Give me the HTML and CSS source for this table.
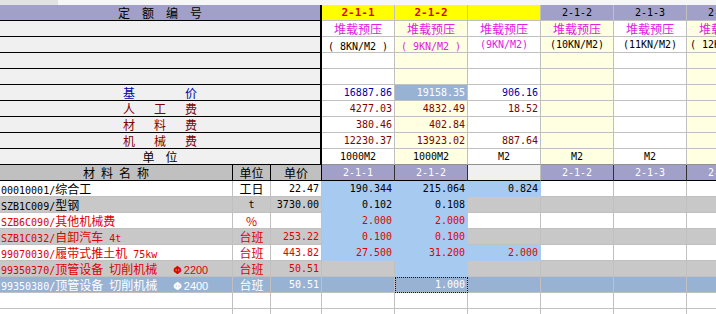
FILE: index.html
```html
<!DOCTYPE html>
<html lang="zh">
<head>
<meta charset="utf-8">
<link rel="stylesheet" href="styles.css">
</head>
<body>
<div class="grid">
  <div class="strip"></div>

  <div class="c m hd spread4">定额编号</div>
  <div class="c yl hr">2-1-1</div>
  <div class="c yl hr">2-1-2</div>
  <div class="c yl"></div>
  <div class="c hd n">2-1-2</div>
  <div class="c hd n">2-1-3</div>
  <div class="c hd n">2-1-4</div>

  <div class="c m"></div>
  <div class="c w mg">堆载预压</div>
  <div class="c ly mg">堆载预压</div>
  <div class="c w mg">堆载预压</div>
  <div class="c ly mg">堆载预压</div>
  <div class="c w mg">堆载预压</div>
  <div class="c ly mg">堆载预压</div>

  <div class="c m"></div>
  <div class="c w"><span class="n">( 8KN/M2 )</span></div>
  <div class="c ly mg"><span class="n">( 9KN/M2 )</span></div>
  <div class="c w mg n">(9KN/M2)</div>
  <div class="c ly n">(10KN/M2)</div>
  <div class="c w n">(11KN/M2)</div>
  <div class="c ly n">( 12KN/M2 )</div>

  <div class="c m"></div>
  <div class="c w"></div>
  <div class="c ly"></div>
  <div class="c w"></div>
  <div class="c ly"></div>
  <div class="c w"></div>
  <div class="c ly"></div>

  <div class="c m"></div>
  <div class="c w"></div>
  <div class="c ly"></div>
  <div class="c w"></div>
  <div class="c ly"></div>
  <div class="c w"></div>
  <div class="c ly"></div>

  <div class="c m"><span class="lab blue"><span>基</span><span>价</span></span></div>
  <div class="c w r n blue">16887.86</div>
  <div class="c sb r n">19158.35</div>
  <div class="c w r n blue">906.16</div>
  <div class="c ly"></div>
  <div class="c w"></div>
  <div class="c ly"></div>

  <div class="c m"><span class="lab dred"><span>人</span><span>工</span><span>费</span></span></div>
  <div class="c w r n dred">4277.03</div>
  <div class="c ly r n dred">4832.49</div>
  <div class="c w r n dred">18.52</div>
  <div class="c ly"></div>
  <div class="c w"></div>
  <div class="c ly"></div>

  <div class="c m"><span class="lab dred"><span>材</span><span>料</span><span>费</span></span></div>
  <div class="c w r n dred">380.46</div>
  <div class="c ly r n dred">402.84</div>
  <div class="c w"></div>
  <div class="c ly"></div>
  <div class="c w"></div>
  <div class="c ly"></div>

  <div class="c m"><span class="lab dred"><span>机</span><span>械</span><span>费</span></span></div>
  <div class="c w r n dred">12230.37</div>
  <div class="c ly r n dred">13923.02</div>
  <div class="c w r n dred">887.64</div>
  <div class="c ly"></div>
  <div class="c w"></div>
  <div class="c ly"></div>

  <div class="c m unitlab"><span class="spread2">单位</span></div>
  <div class="c w n ub">1000M2</div>
  <div class="c ly n ub">1000M2</div>
  <div class="c w n ub">M2</div>
  <div class="c ly n ub">M2</div>
  <div class="c w n ub">M2</div>
  <div class="c ly n ub">M2</div>

  <div class="c gh"><span class="spread1">材料名称</span></div>
  <div class="c gh">单位</div>
  <div class="c gh">单价</div>
  <div class="c lh n">2-1-1</div>
  <div class="c lh n">2-1-2</div>
  <div class="c lg bh"></div>
  <div class="c lh n">2-1-2</div>
  <div class="c lh n">2-1-3</div>
  <div class="c lh n">2-1-4</div>

  <!-- data rows -->
  <div class="c l w"><span class="n">00010001/</span>综合工</div>
  <div class="c w">工日</div>
  <div class="c w r n">22.47</div>
  <div class="c bl r n">190.344</div>
  <div class="c bl r n">215.064</div>
  <div class="c bl r n">0.824</div>
  <div class="c w"></div>
  <div class="c w"></div>
  <div class="c w"></div>

  <div class="c l g"><span class="n">SZB1C009/</span>型钢</div>
  <div class="c g n">t</div>
  <div class="c g r n">3730.00</div>
  <div class="c bl r n">0.102</div>
  <div class="c bl r n">0.108</div>
  <div class="c g"></div>
  <div class="c g"></div>
  <div class="c g"></div>
  <div class="c g"></div>

  <div class="c l w red"><span class="n">SZB6C090/</span>其他机械费</div>
  <div class="c w red">%</div>
  <div class="c w"></div>
  <div class="c bl r n red">2.000</div>
  <div class="c bl r n red">2.000</div>
  <div class="c w"></div>
  <div class="c w"></div>
  <div class="c w"></div>
  <div class="c w"></div>

  <div class="c l g red"><span class="n">SZB1C032/</span>自卸汽车<span class="n"> 4t</span></div>
  <div class="c g red">台班</div>
  <div class="c g r n red">253.22</div>
  <div class="c bl r n red">0.100</div>
  <div class="c bl r n red">0.100</div>
  <div class="c g"></div>
  <div class="c g"></div>
  <div class="c g"></div>
  <div class="c g"></div>

  <div class="c l w red"><span class="n">99070030/</span>履带式推土机<span class="n"> 75kw</span></div>
  <div class="c w red">台班</div>
  <div class="c w r n red">443.82</div>
  <div class="c bl r n red">27.500</div>
  <div class="c bl r n red">31.200</div>
  <div class="c bl r n red">2.000</div>
  <div class="c w"></div>
  <div class="c w"></div>
  <div class="c w"></div>

  <div class="c l g red"><span class="n">99350370/</span>顶管设备<span class="n"> </span>切削机械<span class="phi"><span class="phig">Φ</span>2200</span></div>
  <div class="c g red">台班</div>
  <div class="c g r n red">50.51</div>
  <div class="c g"></div>
  <div class="c bl"></div>
  <div class="c g"></div>
  <div class="c g"></div>
  <div class="c g"></div>
  <div class="c g"></div>

  <div class="c l sb"><span class="n">99350380/</span>顶管设备<span class="n"> </span>切削机械<span class="phi"><span class="phig">Φ</span>2400</span></div>
  <div class="c sb">台班</div>
  <div class="c sb r n">50.51</div>
  <div class="c sb"></div>
  <div class="c sb r n focus">1.000</div>
  <div class="c sb"></div>
  <div class="c sb"></div>
  <div class="c sb"></div>
  <div class="c sb"></div>

  <div class="c w"></div><div class="c w"></div><div class="c w"></div>
  <div class="c w"></div><div class="c w"></div><div class="c w"></div>
  <div class="c w"></div><div class="c w"></div><div class="c w"></div>

  <div class="c w"></div><div class="c w"></div><div class="c w"></div>
  <div class="c w"></div><div class="c w"></div><div class="c w"></div>
  <div class="c w"></div><div class="c w"></div><div class="c w"></div>
</div>
</body>
</html>
```

FILE: styles.css
```css
html, body {
  margin: 0;
  padding: 0;
  background: #ffffff;
}
body {
  width: 716px;
  height: 314px;
  overflow: hidden;
  font-family: "Noto Sans CJK SC", "Noto Sans CJK JP", sans-serif;
  font-size: 12px;
  color: #000;
}
.grid {
  display: grid;
  grid-template-columns: 233px 38px 51px repeat(6, 73px);
  grid-template-rows: 5px;
  grid-auto-rows: 16px;
  width: max-content;
}
.strip {
  grid-column: 1 / -1;
  background: linear-gradient(to right, #e2e2e2 58px, #f6f6f6 58px);
}
.c {
  box-sizing: border-box;
  border-right: 1px solid #c0c0c0;
  border-bottom: 1px solid #c0c0c0;
  line-height: 15px;
  text-align: center;
  white-space: nowrap;
  overflow: hidden;
}
.n {
  font-family: "DejaVu Sans Mono", "Liberation Mono", monospace;
  font-size: 10px;
}
.r { text-align: right; padding-right: 2px; }
.l { text-align: left; padding-left: 1px; }

/* upper merged label area */
.m {
  grid-column: span 3;
  background: #f0f0f0;
  border-bottom: 1px solid #000;
  border-right: 2px solid #000;
  display: flex;
  justify-content: center;
  align-items: center;
}
.hd { background: #a0a0c8; }
.m.hd { border-bottom-color: #000; }
.spread4 { letter-spacing: 12px; padding-left: 12px; }
.spread2 { letter-spacing: 11px; padding-left: 11px; }
.spread1 { letter-spacing: 6px; padding-left: 6px; }
.lab {
  display: flex;
  justify-content: space-between;
  width: 74px;
}
.unitlab { border-bottom-color: #000; }
.ub { border-bottom-color: #909090; }

.yl { background: #ffff00; }
.hr {
  font-family: "DejaVu Sans Mono", monospace;
  font-weight: bold;
  font-size: 11px;
  color: #e00000;
}
.w { background: #ffffff; }
.ly { background: #ffffe1; }
.mg { color: #e020e0; }
.blue { color: #0000a8; }
.dred { color: #800000; }
.red { color: #e00000; }
.sb { background: #98b2d4; color: #ffffff; }
.bl { background: #a6caf0; border-right-color: #a6caf0; border-bottom-color: #a6caf0; }
.g { background: #c8c8c8; }
.lg { background: #f0f0f0; }

/* lower header */
.gh {
  background: #c0c0c0;
  border-right-color: #000;
  border-bottom-color: #000;
}
.lh {
  background: #a0a0c8;
  color: #ffffff;
  border-right-color: #303030;
  border-bottom-color: #000;
}
.bh { border-bottom-color: #000; }

.phi {
  font-family: "Liberation Sans", sans-serif;
  font-size: 11px;
  margin-left: 16px;
}
.phig {
  font-family: "DejaVu Sans", sans-serif;
  font-weight: bold;
  font-size: 10px;
  margin-right: 2px;
}
.focus {
  outline: 1px dotted #101010;
  outline-offset: -1px;
}
```
